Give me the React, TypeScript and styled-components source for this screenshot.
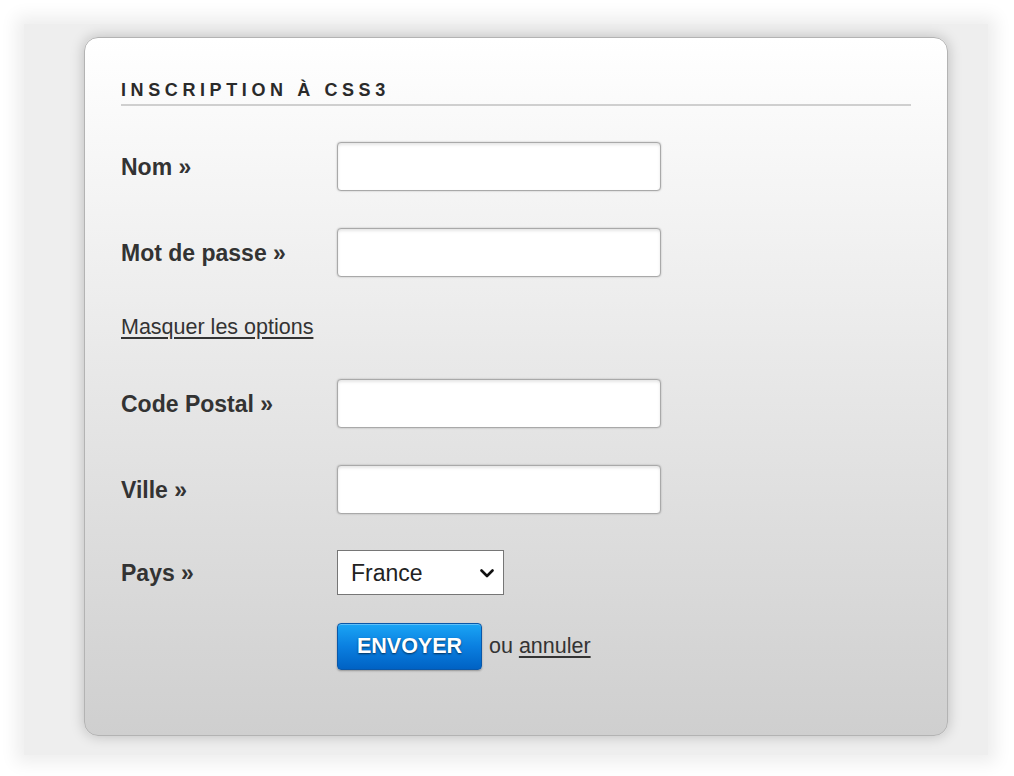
import React from "react";
import styled, { createGlobalStyle } from "styled-components";

const Global = createGlobalStyle`
  html, body { margin: 0; padding: 0; background: #ffffff; }
  body { font-family: "Liberation Sans", Arial, sans-serif; }
  * { box-sizing: border-box; }
`;

const Page = styled.div`
  width: 1014px;
  height: 776px;
  padding: 24px 26px 0 24px;
  overflow: hidden;
`;

const Frame = styled.div`
  background: #eeeeee;
  box-shadow: 0 0 16px 8px #eeeeee;
  padding: 13px 40px 19px 60px;
`;

const Card = styled.form`
  width: 864px;
  border: 1px solid #b3b3b3;
  border-radius: 14px;
  background: linear-gradient(to bottom, #ffffff 0%, #cfcfcf 100%);
  box-shadow: 0 0 14px rgba(0, 0, 0, 0.22);
  padding: 42px 36px 65px 36px;
  color: #333333;
`;

const Title = styled.h1`
  margin: 0;
  font-size: 18px;
  line-height: 20px;
  font-weight: bold;
  letter-spacing: 4.6px;
  color: #2a2a2a;
  padding-bottom: 4px;
  border-bottom: 2px solid #cfcfcf;
`;

const Row = styled.div<{ $top: number }>`
  display: grid;
  grid-template-columns: 216px 1fr;
  align-items: center;
  margin-top: ${(p) => p.$top}px;
`;

const Label = styled.label`
  font-size: 23px;
  font-weight: bold;
  color: #333333;
  line-height: 28px;
`;

const TextInput = styled.input`
  width: 324px;
  height: 49px;
  border: 1px solid #a9a9a9;
  border-radius: 4px;
  background: #ffffff;
  box-shadow: inset 0 2px 3px rgba(0, 0, 0, 0.1), 0 0 2px rgba(0, 0, 0, 0.25);
  font-size: 21px;
  padding: 0 10px;
  outline: none;
`;

const ToggleLink = styled.a<{ $top: number }>`
  display: block;
  width: max-content;
  margin-top: ${(p) => p.$top}px;
  font-size: 21.5px;
  line-height: 25px;
  color: #333333;
  text-decoration: underline;
  text-underline-offset: 3px;
  cursor: pointer;
`;

const SelectWrap = styled.div`
  position: relative;
  width: 167px;
  height: 45px;
`;

const Select = styled.select`
  width: 167px;
  height: 45px;
  appearance: none;
  -webkit-appearance: none;
  font-family: "Liberation Sans", Arial, sans-serif;
  font-size: 23px;
  color: #222222;
  background: #ffffff;
  border: 1px solid #767676;
  border-radius: 0;
  padding: 0 30px 0 13px;
  outline: none;
`;

const Chevron = styled.svg`
  position: absolute;
  right: 10px;
  top: 50%;
  width: 14px;
  height: 9px;
  margin-top: -4px;
  pointer-events: none;
`;

const Actions = styled.div<{ $top: number }>`
  display: flex;
  align-items: center;
  gap: 7px;
  margin-top: ${(p) => p.$top}px;
  margin-left: 216px;
`;

const Submit = styled.button`
  width: 145px;
  height: 47px;
  border: 1px solid #0a57a8;
  border-radius: 4px;
  background: linear-gradient(to bottom, #1aa5f5 0%, #0a7fe0 50%, #0062c4 100%);
  box-shadow: 0 1px 2px rgba(0, 0, 0, 0.3), inset 0 1px 0 rgba(255, 255, 255, 0.3);
  color: #ffffff;
  font-family: "Liberation Sans", Arial, sans-serif;
  font-size: 21.5px;
  font-weight: bold;
  text-shadow: 0 1px 2px rgba(0, 0, 0, 0.6);
  cursor: pointer;
  padding: 0;
`;

const Aside = styled.span`
  font-size: 21.5px;
  color: #333333;
  a {
    color: #333333;
    text-decoration: underline;
    text-underline-offset: 3px;
  }
`;

export default function App() {
  return (
    <>
      <Global />
      <Page>
        <Frame>
          <Card onSubmit={(e) => e.preventDefault()}>
            <Title>INSCRIPTION À CSS3</Title>
            <Row $top={36}>
              <Label htmlFor="nom">Nom »</Label>
              <TextInput id="nom" type="text" />
            </Row>
            <Row $top={37}>
              <Label htmlFor="pass">Mot de passe »</Label>
              <TextInput id="pass" type="password" />
            </Row>
            <ToggleLink $top={38}>Masquer les options</ToggleLink>
            <Row $top={39}>
              <Label htmlFor="cp">Code Postal »</Label>
              <TextInput id="cp" type="text" />
            </Row>
            <Row $top={37}>
              <Label htmlFor="ville">Ville »</Label>
              <TextInput id="ville" type="text" />
            </Row>
            <Row $top={36}>
              <Label htmlFor="pays">Pays »</Label>
              <SelectWrap>
                <Select id="pays" defaultValue="France">
                  <option>France</option>
                  <option>Belgique</option>
                  <option>Suisse</option>
                  <option>Canada</option>
                </Select>
                <Chevron viewBox="0 0 14 9">
                  <path d="M1.5 1.5 L7 7 L12.5 1.5" fill="none" stroke="#111" strokeWidth="2.6" strokeLinecap="round" strokeLinejoin="round" />
                </Chevron>
              </SelectWrap>
            </Row>
            <Actions $top={28}>
              <Submit type="submit">ENVOYER</Submit>
              <Aside>
                ou <a href="#">annuler</a>
              </Aside>
            </Actions>
          </Card>
        </Frame>
      </Page>
    </>
  );
}
